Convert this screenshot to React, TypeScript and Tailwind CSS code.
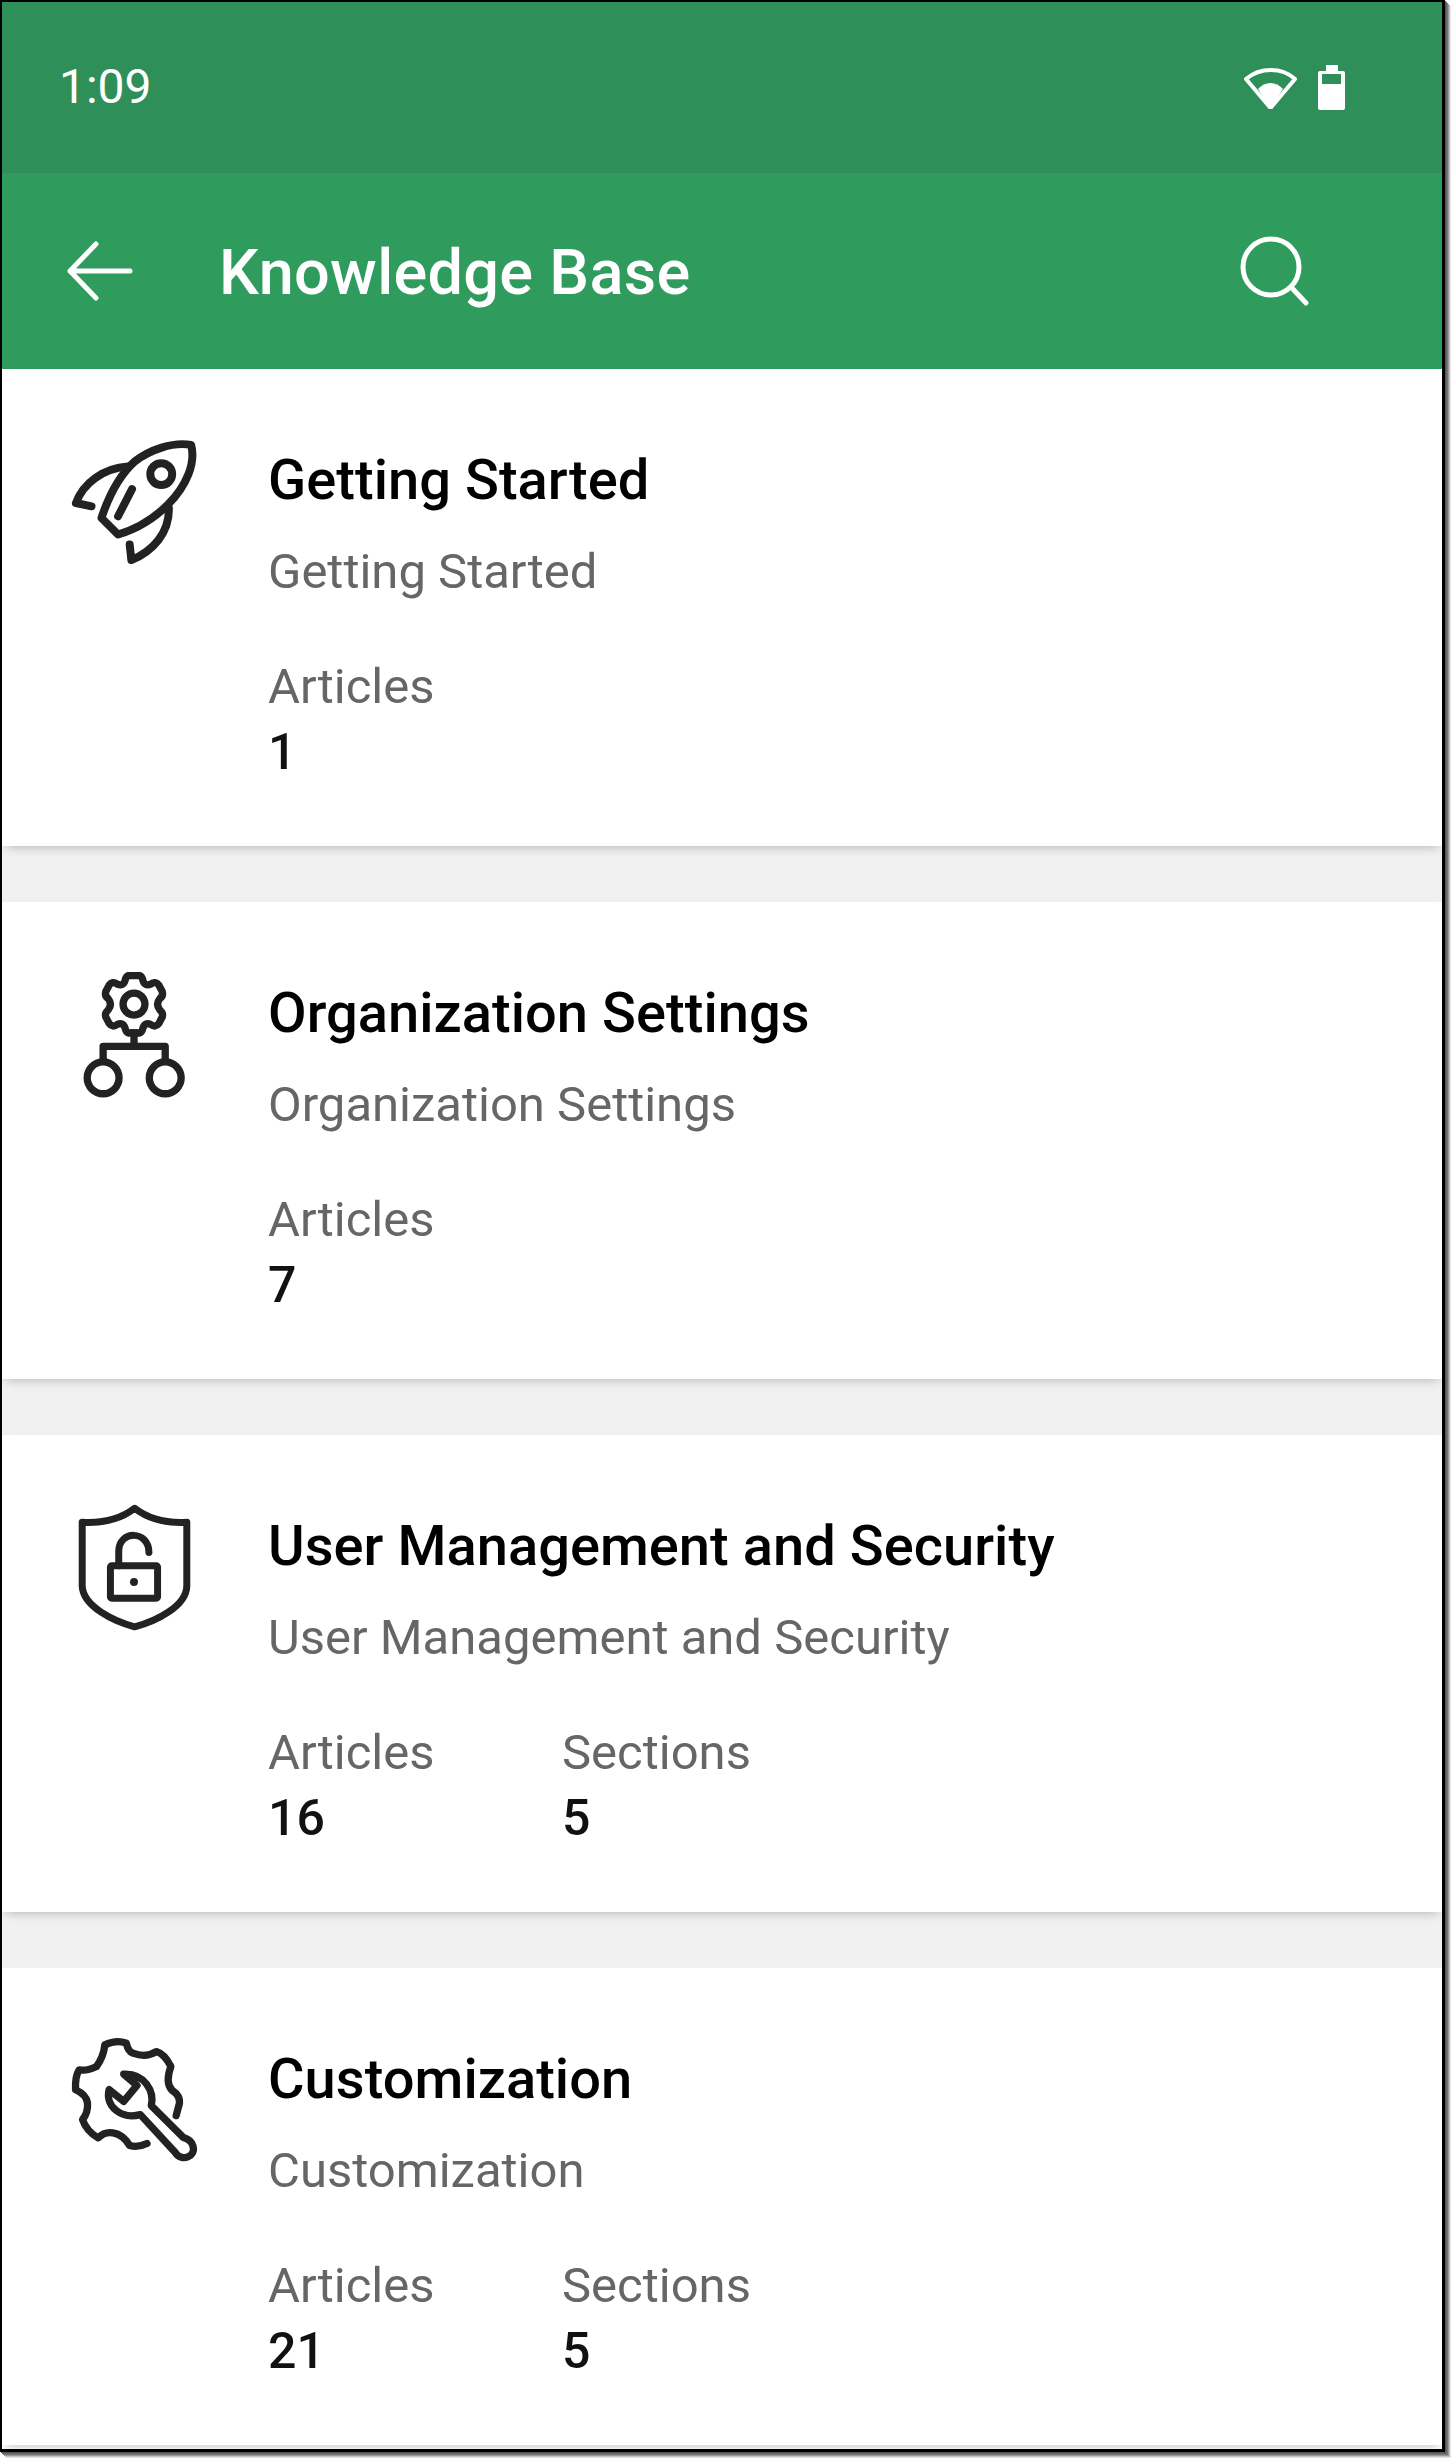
const FONT = "font-['Roboto',sans-serif]";

function RocketIcon() {
  return (
    <svg viewBox="0 0 512 512" className="w-[170px] h-[170px]" fill="none" stroke="#222" strokeWidth="24" strokeLinecap="round" strokeLinejoin="round">
      <path d="M205 345 L155 295 C175 235 205 170 255 125 C300 90 370 65 425 75 C440 130 410 200 355 255 C310 300 255 330 205 345 Z" />
      <circle cx="335" cy="163" r="33" />
      <path d="M247 208 L205 290" />
      <path d="M125 260 L78 250 C100 190 160 145 235 140" />
      <path d="M240 375 L245 422 C310 395 360 340 358 265" />
    </svg>
  );
}

function OrgIcon() {
  return (
    <svg viewBox="0 0 512 512" className="w-[170px] h-[170px]" fill="none" stroke="#222" strokeWidth="22" strokeLinecap="round" strokeLinejoin="round">
      <path d="M236 77 H270 Q277 79 280 92 Q286 110 303 103 Q318 92 328 106 L338 125 Q342 138 331 146 Q317 163 331 181 Q342 189 338 202 L328 221 Q318 235 303 224 Q286 217 280 235 Q277 248 270 250 H236 Q229 248 226 235 Q220 217 203 224 Q188 235 178 221 L168 202 Q164 189 175 181 Q189 163 175 146 Q164 138 168 125 L178 106 Q188 92 203 103 Q220 110 226 92 Q229 79 236 77 Z" />
      <circle cx="253" cy="163" r="33" />
      <path d="M253 250 V290 M160 330 V290 H347 V330" strokeLinecap="square" />
      <circle cx="160" cy="385" r="48" />
      <circle cx="347" cy="385" r="48" />
    </svg>
  );
}

function ShieldIcon() {
  return (
    <svg viewBox="0 0 512 512" className="w-[170px] h-[170px]" fill="none" stroke="#222" strokeWidth="21" strokeLinecap="round" strokeLinejoin="round">
      <path d="M255 55 C210 90 150 100 97 97 V290 C100 350 190 395 255 412 C320 395 410 350 412 290 V97 C360 100 300 90 255 55 Z" />
      <rect x="182" y="228" width="142" height="98" rx="4" />
      <path d="M207 228 V185 C207 120 298 120 298 188" />
      <circle cx="253" cy="277" r="12" fill="#222" stroke="none" />
    </svg>
  );
}

function WrenchIcon() {
  return (
    <svg viewBox="0 0 512 512" className="w-[170px] h-[170px]" fill="none" stroke="#222" strokeWidth="22" strokeLinecap="round" strokeLinejoin="round">
      <path d="M380 288 L390 250 Q392 228 368 212 Q346 190 364 140 Q345 102 320 95 Q290 115 250 100 Q235 95 230 70 Q200 58 165 75 Q162 110 140 140 Q110 155 88 150 Q75 170 77 210 Q110 225 113 250 Q115 280 98 300 Q110 335 145 355 Q165 335 190 340 Q220 345 240 378 Q265 385 292 372" />
      <path d="M222 163 L262 197 L222 245 L178 210 C165 260 215 300 272 285 L378 400 C395 428 442 412 430 378 C425 362 412 357 402 354 L305 258 C315 215 285 160 222 163 Z" />
    </svg>
  );
}

const cards = [
  { title: "Getting Started", articles: "1", iconTop: "mt-[51px]", Icon: RocketIcon },
  { title: "Organization Settings", articles: "7", iconTop: "mt-[48px]", Icon: OrgIcon },
  { title: "User Management and Security", articles: "16", sections: "5", iconTop: "mt-[55px]", Icon: ShieldIcon },
  { title: "Customization", articles: "21", sections: "5", iconTop: "mt-[52px]", Icon: WrenchIcon },
];

function Stat({ label, value }: { label: string; value: string }) {
  return (
    <div className="w-[294px]">
      <div className="text-[49px] leading-[50px] text-[#666]">{label}</div>
      <div className="mt-[15px] text-[50px] leading-[50px] text-[#111] font-medium">{value}</div>
    </div>
  );
}

export default function App() {
  return (
    <div className={`w-[1454px] h-[2461px] bg-white ${FONT}`}>
      <div className="w-[1445px] h-[2452px] border-t-2 border-l-2 border-r-[3px] border-b-[3px] border-black overflow-hidden shadow-[1px_1px_0_#555,2px_2px_0_#666,3px_3px_0_#777,4px_4px_0_#999,5px_5px_0_#c4c4c4,6px_6px_0_#e4e4e4]">
        <div className="h-[171px] bg-[#2e9058] flex items-center justify-between pl-[57px] pr-[97px] text-white">
          <span className="text-[48px] leading-none mt-[-1px]">1:09</span>
          <div className="flex items-center gap-[21px]">
            <svg viewBox="0 0 53 43" className="w-[53px] h-[43px]" fill="none">
              <path d="M2 13 C16 1 38 1 51 13 L26.5 42 Z" stroke="white" strokeWidth="4" strokeLinejoin="round" />
              <path d="M14 23 C21 15 32 15 39 23 L26.5 42 Z" fill="white" />
            </svg>
            <svg viewBox="0 0 27 45" className="w-[27px] h-[45px]">
              <path fillRule="evenodd" fill="white" d="M8 0 H20 V6 H25 Q27 6 27 8 V43 Q27 45 25 45 H2 Q0 45 0 43 V8 Q0 6 2 6 H8 Z M4 9 V19 H23 V9 Z" />
            </svg>
          </div>
        </div>
        <div className="h-[196px] bg-[#2f9b5c] flex items-center text-white">
          <svg viewBox="0 0 70 60" className="ml-[63px] w-[70px] h-[60px] shrink-0" fill="none" stroke="white" strokeWidth="5" strokeLinecap="round" strokeLinejoin="round">
            <path d="M65 30 H5 M31 3 L5 30 L31 57" />
          </svg>
          <span className="ml-[84px] text-[63px] leading-none font-medium tracking-[0.3px] flex-1 mt-[3px]">Knowledge Base</span>
          <svg viewBox="0 0 80 80" className="w-[80px] h-[80px] mr-[126px] mt-[6px]" fill="none" stroke="white" strokeWidth="5" strokeLinecap="round">
            <circle cx="35" cy="33" r="28" />
            <path d="M55 53 L70 69" />
          </svg>
        </div>
        <div className="bg-[#f1f1f1] flex flex-col gap-[56px]">
          {cards.map(({ title, articles, sections, iconTop, Icon }) => (
            <div key={title} className="h-[477px] bg-white flex shadow-[0_5px_10px_-4px_rgba(0,0,0,0.25)]">
              <div className={`ml-[48px] w-[170px] shrink-0 ${iconTop}`}>
                <Icon />
              </div>
              <div className="ml-[48px] pt-[76px]">
                <div className="text-[56px] leading-[70px] font-medium text-black tracking-[0.05px]">{title}</div>
                <div className="mt-[27px] text-[49px] leading-[60px] text-[#666]">{title}</div>
                <div className="mt-[60px] flex">
                  <Stat label="Articles" value={articles} />
                  {sections && <Stat label="Sections" value={sections} />}
                </div>
              </div>
            </div>
          ))}
        </div>
      </div>
    </div>
  );
}
